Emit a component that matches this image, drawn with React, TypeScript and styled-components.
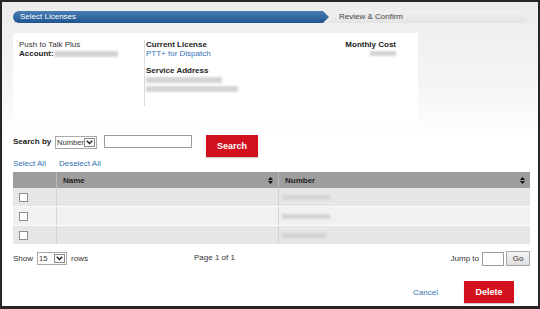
import React from "react";
import styled, { createGlobalStyle } from "styled-components";

const Global = createGlobalStyle`
  html, body { margin: 0; padding: 0; }
  body { font-family: "Liberation Sans", Arial, sans-serif; color: #333; }
  * { box-sizing: border-box; }
`;

const Frame = styled.div`
  width: 540px;
  height: 309px;
  border: 2px solid #262626;
  border-bottom-width: 3px;
  background: linear-gradient(#ececec 0px, #f6f6f6 90px, #ffffff 135px);
  padding: 9px 8px 0 11px;
  font-size: 8px;
  line-height: 9px;
  overflow: hidden;
`;

const Stepper = styled.div`
  display: flex;
  height: 12px;
`;

const StepActive = styled.div`
  width: 316px;
  height: 12px;
  border-radius: 6px 0 0 6px;
  background: linear-gradient(#4a7db5, #1f548f);
  clip-path: polygon(0 0, calc(100% - 6px) 0, 100% 50%, calc(100% - 6px) 100%, 0 100%);
  color: #fff;
  padding-left: 7px;
  line-height: 12px;
  font-size: 8px;
`;

const StepNext = styled.div`
  flex: 1;
  margin-left: -2px;
  height: 12px;
  background: linear-gradient(#f0f0f0, #e4e4e4);
  clip-path: polygon(0 0, calc(100% - 5px) 0, 100% 50%, calc(100% - 5px) 100%, 0 100%, 6px 50%);
  color: #444;
  padding-left: 12px;
  line-height: 12px;
  font-size: 8px;
`;

const InfoPanel = styled.div`
  margin-top: 10px;
  width: 405px;
  height: 89px;
  background: #fff;
  display: flex;
  padding-top: 7px;
`;

const InfoCol = styled.div<{ $w?: number; $divider?: boolean; $right?: boolean }>`
  ${(p) => (p.$w ? `width: ${p.$w}px;` : "flex: 1;")}
  height: 66px;
  padding-left: ${(p) => (p.$divider ? 1 : 6)}px;
  ${(p) => p.$divider && "border-left: 1px solid #dcdcdc;"}
  ${(p) => p.$right && "text-align: right; padding-right: 22px;"}
`;

const Line = styled.div<{ $gap?: number }>`
  margin-top: ${(p) => p.$gap ?? 0}px;
  white-space: nowrap;
`;

const Bold = styled.span`
  font-weight: bold;
  color: #222;
`;

const BlueText = styled.span`
  color: #3573b5;
`;

const Blur = styled.span<{ $w: number; $h?: number }>`
  display: inline-block;
  width: ${(p) => p.$w}px;
  height: ${(p) => p.$h ?? 6}px;
  background: #d4d4d4;
  filter: blur(1.2px);
  vertical-align: middle;
`;

const SearchRow = styled.div`
  margin-top: 13px;
  display: flex;
  align-items: flex-start;
  height: 22px;
`;

const SearchLabel = styled.span`
  font-weight: bold;
  color: #222;
  margin-top: 2px;
  width: 42px;
`;

const FakeSelect = styled.div<{ $w: number }>`
  width: ${(p) => p.$w}px;
  height: 13px;
  border: 1px solid #a9a9a9;
  background: #fff;
  display: flex;
  align-items: center;
  justify-content: space-between;
  padding-left: 1px;
  padding-right: 1px;
  font-size: 7.6px;
  color: #333;
`;

const Caret = styled.span`
  width: 11px;
  height: 9px;
  border: 1px solid #8a8a8a;
  background: #fafafa;
  display: flex;
  align-items: center;
  justify-content: center;
`;

const TextInput = styled.div<{ $w: number; $h: number }>`
  width: ${(p) => p.$w}px;
  height: ${(p) => p.$h}px;
  border: 1px solid #9c9c9c;
  background: #fff;
`;

const RedButton = styled.button<{ $w: number }>`
  width: ${(p) => p.$w}px;
  height: 22px;
  border: none;
  background: #d3101d;
  color: #fff;
  font-family: inherit;
  font-weight: bold;
  font-size: 9px;
  padding: 0;
  box-shadow: 0 1px 1px rgba(0, 0, 0, 0.2);
`;

const Links = styled.div`
  margin-top: 2px;
  display: flex;
  gap: 13px;
  height: 9px;
`;

const Link = styled.span`
  color: #3573b5;
`;

const Table = styled.div`
  margin-top: 4px;
  width: 517px;
`;

const HeadRow = styled.div`
  display: grid;
  grid-template-columns: 43px 222px 1fr;
  height: 16px;
  background: #9d9d9d;
`;

const HeadCell = styled.div<{ $sep?: boolean }>`
  display: flex;
  align-items: center;
  justify-content: space-between;
  padding: 0 5px 0 6px;
  font-weight: bold;
  color: #1e1e1e;
  ${(p) => p.$sep && "border-left: 1px solid #b9b9b9;"}
`;

const BodyRow = styled.div<{ $alt: boolean }>`
  display: grid;
  grid-template-columns: 43px 222px 1fr;
  height: 19px;
  background: ${(p) => (p.$alt ? "#f1f1f1" : "#e6e6e6")};
  border-bottom: 1px solid #fafafa;
`;

const Cell = styled.div<{ $sep?: boolean }>`
  display: flex;
  align-items: center;
  padding-left: 6px;
  ${(p) => p.$sep && "border-left: 1px solid #d4d4d4;"}
`;

const Check = styled.span`
  width: 9px;
  height: 9px;
  border: 1px solid #8e8e8e;
  background: #fff;
`;

const Footer = styled.div`
  margin-top: 6px;
  display: flex;
  align-items: center;
  height: 15px;
  width: 517px;
`;

const ShowGroup = styled.div`
  display: flex;
  align-items: center;
  gap: 4px;
  width: 181px;
`;

const PageText = styled.span`
  margin-top: -3px;
`;

const JumpGroup = styled.div`
  margin-left: auto;
  display: flex;
  align-items: center;
  gap: 3px;
`;

const GoButton = styled.button`
  width: 24px;
  height: 15px;
  border: 1px solid #a8a8a8;
  background: linear-gradient(#f4f4f4, #dedede);
  font-family: inherit;
  font-size: 8px;
  color: #333;
  padding: 0;
  margin-left: -1px;
`;

const Actions = styled.div`
  margin-top: 15px;
  display: flex;
  align-items: center;
  justify-content: flex-end;
  padding-right: 16px;
  gap: 26px;
`;

const SortIcon = () => (
  <svg width="5" height="7" viewBox="0 0 5 7">
    <path d="M2.5 0 L5 3 L0 3 Z M0 4 L5 4 L2.5 7 Z" fill="#111" />
  </svg>
);

const Chevron = () => (
  <svg width="7" height="5" viewBox="0 0 7 5">
    <path d="M0.8 0.8 L3.5 3.6 L6.2 0.8" fill="none" stroke="#222" strokeWidth="1.4" />
  </svg>
);

const rows = [18, 18, 14];

export default function App() {
  return (
    <>
      <Global />
      <Frame>
        <Stepper>
          <StepActive>Select Licenses</StepActive>
          <StepNext>Review &amp; Confirm</StepNext>
        </Stepper>

        <InfoPanel>
          <InfoCol $w={131}>
            <Line>Push to Talk Plus</Line>
            <Line>
              <Bold>Account:</Bold>
              <Blur $w={64} />
            </Line>
          </InfoCol>
          <InfoCol $w={150} $divider>
            <Line>
              <Bold>Current License</Bold>
            </Line>
            <Line>
              <BlueText>PTT+ for Dispatch</BlueText>
            </Line>
            <Line $gap={8}>
              <Bold>Service Address</Bold>
            </Line>
            <Line>
              <Blur $w={76} />
            </Line>
            <Line>
              <Blur $w={92} />
            </Line>
          </InfoCol>
          <InfoCol $right>
            <Line>
              <Bold>Monthly Cost</Bold>
            </Line>
            <Line>
              <Blur $w={26} $h={5} />
            </Line>
          </InfoCol>
        </InfoPanel>

        <SearchRow>
          <SearchLabel>Search by</SearchLabel>
          <FakeSelect $w={42} style={{ marginTop: 1 }}>
            Number
            <Caret>
              <Chevron />
            </Caret>
          </FakeSelect>
          <TextInput $w={88} $h={13} style={{ marginLeft: 7 }} />
          <RedButton $w={52} style={{ marginLeft: 14 }}>
            Search
          </RedButton>
        </SearchRow>

        <Links>
          <Link>Select All</Link>
          <Link>Deselect All</Link>
        </Links>

        <Table>
          <HeadRow>
            <HeadCell />
            <HeadCell $sep>
              Name
              <SortIcon />
            </HeadCell>
            <HeadCell $sep>
              Number
              <SortIcon />
            </HeadCell>
          </HeadRow>
          {rows.map((w, i) => (
            <BodyRow key={i} $alt={i === 1}>
              <Cell>
                <Check />
              </Cell>
              <Cell $sep />
              <Cell $sep style={{ paddingLeft: 3 }}>
                <Blur $w={w + 30} $h={5} />
              </Cell>
            </BodyRow>
          ))}
        </Table>

        <Footer>
          <ShowGroup>
            <span>Show</span>
            <FakeSelect $w={30}>
              15
              <Caret>
                <Chevron />
              </Caret>
            </FakeSelect>
            <span>rows</span>
          </ShowGroup>
          <PageText>Page 1 of 1</PageText>
          <JumpGroup>
            <span>Jump to</span>
            <TextInput $w={22} $h={14} />
            <GoButton>Go</GoButton>
          </JumpGroup>
        </Footer>

        <Actions>
          <Link>Cancel</Link>
          <RedButton $w={50}>Delete</RedButton>
        </Actions>
      </Frame>
    </>
  );
}
